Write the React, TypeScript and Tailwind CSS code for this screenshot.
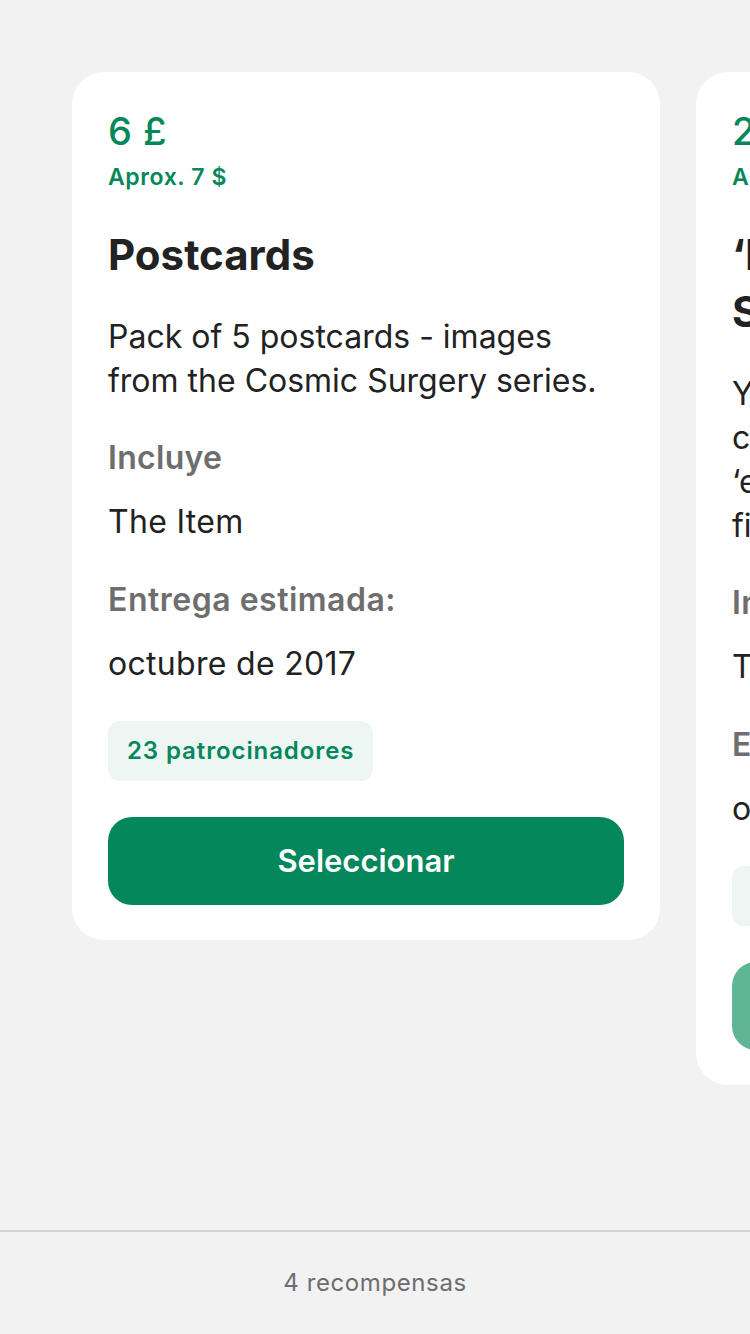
import React from 'react';

interface Recompensa {
  precio: string;
  aprox: string;
  titulo: React.ReactNode;
  descripcion: React.ReactNode;
  incluye: string;
  entrega: string;
  patrocinadores: string;
  desactivado?: boolean;
}

const recompensas: Recompensa[] = [
  {
    precio: '6 £',
    aprox: 'Aprox. 7 $',
    titulo: 'Postcards',
    descripcion: 'Pack of 5 postcards - images from the Cosmic Surgery series.',
    incluye: 'The Item',
    entrega: 'octubre de 2017',
    patrocinadores: '23 patrocinadores',
  },
  {
    precio: '25 £',
    aprox: 'Aprox. 32 $',
    titulo: (
      <>
        ‘Infinite Space’
        <br />
        Signed Print
      </>
    ),
    descripcion: (
      <>
        You will receive a signed print of
        <br />
        cosmic surgery artwork from the
        <br />
        ‘eye’ series, hand numbered and
        <br />
        finished with a certificate.
      </>
    ),
    incluye: 'The Item',
    entrega: 'octubre de 2017',
    patrocinadores: '41 patrocinadores',
    desactivado: true,
  },
];

function Tarjeta({ r }: { r: Recompensa }) {
  return (
    <div className="flex w-[588px] shrink-0 flex-col rounded-[32px] bg-white px-[36px] pt-[36px] pb-[35px]">
      <p className="text-[38px] leading-[46px] font-medium tracking-[0.5px] text-[#04875a]">
        {r.precio}
      </p>
      <p className="mt-[9px] text-[23px] leading-[28px] font-semibold tracking-[0.6px] text-[#04875a]">
        {r.aprox}
      </p>
      <h2 className="mt-[35px] text-[42px] leading-[57px] font-bold text-[#222222]">{r.titulo}</h2>
      <p className="mt-[32px] text-[32px] leading-[44px] text-[#222222]">{r.descripcion}</p>
      <p className="mt-[33px] text-[32px] leading-[44px] font-semibold tracking-[0.3px] text-[#6e6e6e]">
        Incluye
      </p>
      <p className="mt-[20px] text-[32px] leading-[44px] tracking-[0.3px] text-[#222222]">
        {r.incluye}
      </p>
      <p className="mt-[34px] text-[32px] leading-[44px] font-semibold tracking-[0.5px] text-[#6e6e6e]">
        Entrega estimada:
      </p>
      <p className="mt-[20px] text-[32px] leading-[44px] tracking-[0.3px] text-[#222222]">
        {r.entrega}
      </p>
      <div className="mt-[35px] flex">
        <span className="flex h-[60px] items-center rounded-[12px] bg-[#edf6f2] px-[19px] text-[24px] font-semibold tracking-[0.9px] text-[#04875a]">
          {r.patrocinadores}
        </span>
      </div>
      <button
        type="button"
        className={
          r.desactivado
            ? 'mt-[36px] h-[88px] w-full rounded-[24px] bg-[#5fb594] text-[31px] font-semibold text-white'
            : 'mt-[36px] h-[88px] w-full rounded-[24px] bg-[#04875a] text-[31px] font-semibold text-white'
        }
      >
        Seleccionar
      </button>
    </div>
  );
}

export default function App() {
  return (
    <div
      className="flex h-[1334px] w-[750px] flex-col overflow-hidden bg-[#f2f2f2]"
      style={{ fontFamily: 'Inter, "Noto Sans", sans-serif' }}
    >
      <div className="flex flex-1 items-start gap-[36px] overflow-hidden pt-[72px] pl-[72px]">
        {recompensas.map((r, i) => (
          <Tarjeta key={i} r={r} />
        ))}
      </div>
      <div className="flex h-[104px] items-center justify-center border-t-2 border-[#d3d3d3] text-[24px] tracking-[0.6px] text-[#6d6d6d]">
        4 recompensas
      </div>
    </div>
  );
}
